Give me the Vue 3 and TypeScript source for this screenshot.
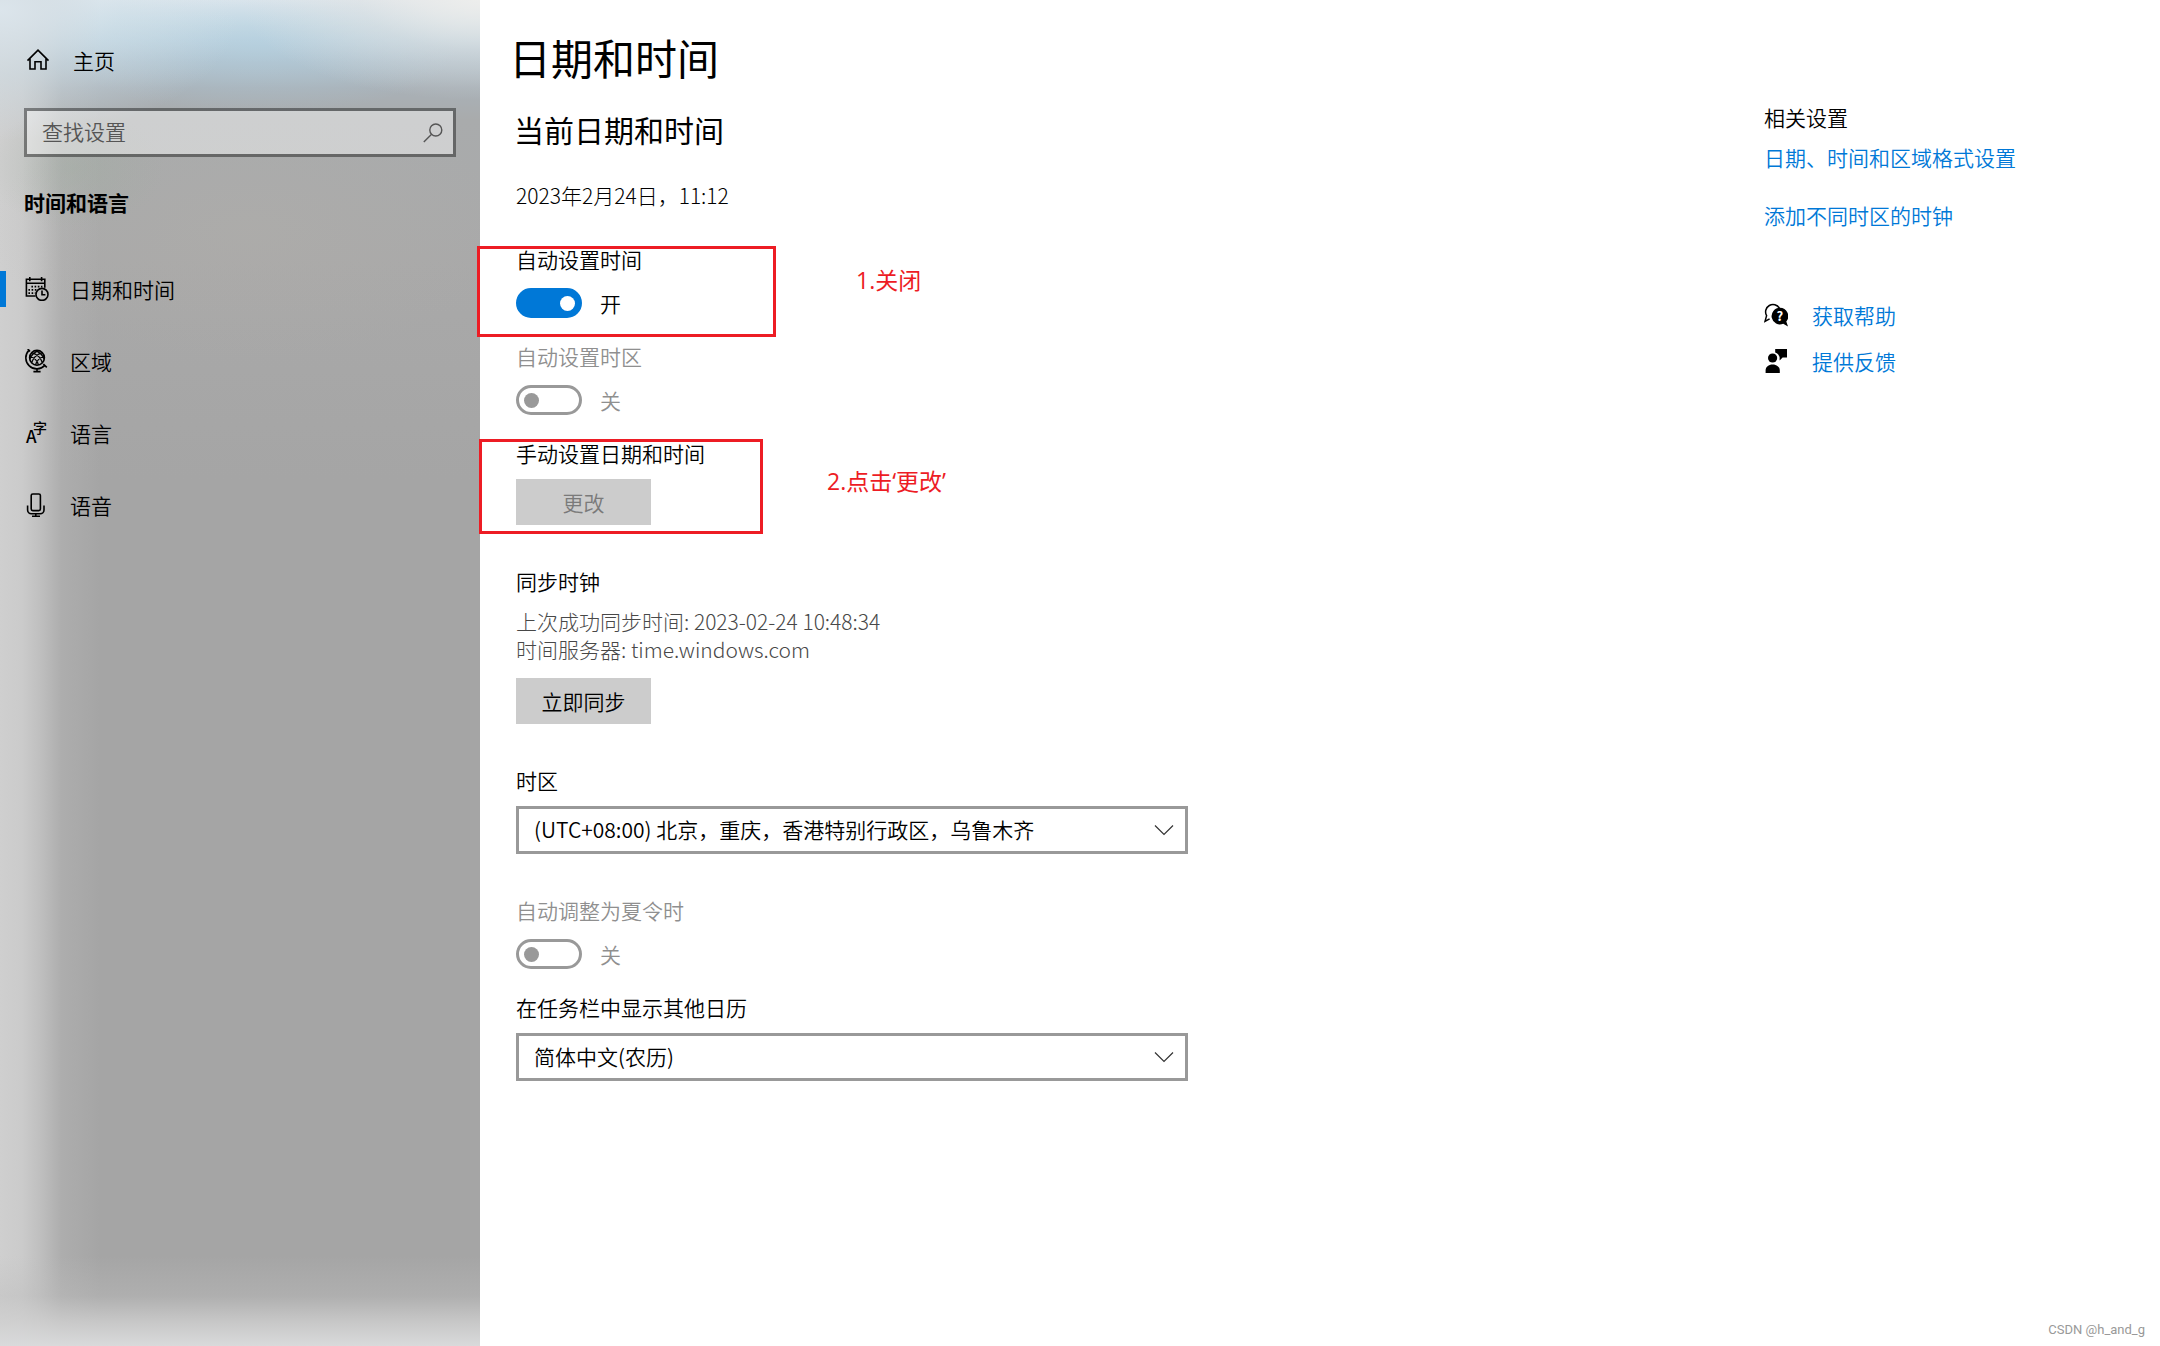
<script setup lang="ts">
import { ref } from 'vue'

interface NavItem {
  id: string
  label: string
}

const navItems: NavItem[] = [
  { id: 'datetime', label: '日期和时间' },
  { id: 'region', label: '区域' },
  { id: 'language', label: '语言' },
  { id: 'speech', label: '语音' },
]

const active = ref('datetime')
const autoTime = ref(true)
const autoZone = ref(false)
const daylight = ref(false)
const query = ref('')
const zone = ref('cn')
const calendar = ref('lunar')
</script>

<template>
  <div class="page">
    <aside class="sidebar">
      <a class="home" href="#">
        <svg class="icon" viewBox="0 0 24 24" aria-hidden="true">
          <path d="M1.5 12.6 12 2.2 22.5 12.6M4 10.6V21h5v-7.2h6V21h5V10.6" />
        </svg>
        <span>主页</span>
      </a>

      <div class="search">
        <input v-model="query" type="text" placeholder="查找设置" aria-label="查找设置" />
        <svg class="search-icon" viewBox="0 0 20 20" aria-hidden="true">
          <circle cx="12.8" cy="7" r="6" />
          <path d="M8.6 11.3 .8 19" />
        </svg>
      </div>

      <h2 class="group-title">时间和语言</h2>

      <nav class="nav">
        <a
          v-for="item in navItems"
          :key="item.id"
          href="#"
          class="nav-item"
          :class="{ active: item.id === active }"
          @click.prevent="active = item.id"
        >
          <svg v-if="item.id === 'datetime'" class="icon" viewBox="0 0 24 24" aria-hidden="true">
            <path d="M10.5 19H1.4V2.2h18.4v8.6M1.4 6.2h18.4M4.8 0v4.2M16.6 0v4.2" />
            <path class="dots" d="M6.4 9.6h11M3.4 12.9h9M3.4 16.1h7" />
            <circle cx="17" cy="17.4" r="6" />
            <path d="M17 13.4v4.4h3.4" />
          </svg>
          <svg v-else-if="item.id === 'region'" class="icon" viewBox="0 0 24 24" aria-hidden="true">
            <circle cx="12" cy="8.8" r="7.4" />
            <path class="mesh" d="M6.800 3.800Q14.500 5.500 17.400 13.800M4.800 7.500Q11.500 9 13.500 16M10.500 1.600Q17 4 19.200 10.400M17.200 3.800Q9.500 5.500 6.600 13.800M19.200 7.500Q12.500 9 10.500 16M13.500 1.600Q7 4 4.800 10.400" />
            <path d="M2.600 -.4 5 2.400M18.400 15 21.800 18.400M3.800 1.400A10.800 10.800 0 0 0 19.800 16.400M12 19.600v3M8.400 22.600h7.200" />
          </svg>
          <svg v-else-if="item.id === 'language'" class="icon letters" viewBox="-5 -5 34 34" aria-hidden="true">
            <text x="1" y="22" font-size="17">A</text>
            <text x="8" y="12" font-size="14">字</text>
          </svg>
          <svg v-else class="icon" viewBox="0 0 24 24" aria-hidden="true">
            <rect x="6.200" y="1" width="9.200" height="16.600" rx="1.600" />
            <path d="M2.600 12.600V17a3.800 3.800 0 0 0 3.800 3.800h8.800A3.800 3.800 0 0 0 19 17v-4.400M10.800 21v2.400M7 23.400h8" />
          </svg>
          <span>{{ item.label }}</span>
        </a>
      </nav>
    </aside>

    <main class="content">
      <h1>日期和时间</h1>
      <h2>当前日期和时间</h2>
      <p class="now">2023年2月24日，11:12</p>

      <section class="field first">
        <label for="auto-time">自动设置时间</label>
        <div class="toggle-row">
          <input id="auto-time" v-model="autoTime" class="toggle" type="checkbox" role="switch" />
          <span>{{ autoTime ? '开' : '关' }}</span>
        </div>
        <div class="mark mark-time"></div>
        <p class="note note-time">1.关闭</p>
      </section>

      <section class="field near disabled">
        <label for="auto-zone">自动设置时区</label>
        <div class="toggle-row">
          <input id="auto-zone" v-model="autoZone" class="toggle" type="checkbox" role="switch" disabled />
          <span>{{ autoZone ? '开' : '关' }}</span>
        </div>
      </section>

      <section class="field near">
        <h3>手动设置日期和时间</h3>
        <button class="button" type="button" disabled>更改</button>
        <div class="mark mark-manual"></div>
        <p class="note note-manual">2.点击‘更改’</p>
      </section>

      <section class="field">
        <h3>同步时钟</h3>
        <p class="sync">
          上次成功同步时间: 2023-02-24 10:48:34<br />
          时间服务器: time.windows.com
        </p>
        <button class="button sync-button" type="button">立即同步</button>
      </section>

      <section class="field">
        <label for="zone">时区</label>
        <div class="select">
          <select id="zone" v-model="zone">
            <option value="cn">(UTC+08:00) 北京，重庆，香港特别行政区，乌鲁木齐</option>
          </select>
          <svg class="chevron" viewBox="0 0 20 12" aria-hidden="true"><path d="m1 1.500 9 9 9-9" /></svg>
        </div>
      </section>

      <section class="field disabled">
        <label for="daylight">自动调整为夏令时</label>
        <div class="toggle-row">
          <input id="daylight" v-model="daylight" class="toggle" type="checkbox" role="switch" disabled />
          <span>{{ daylight ? '开' : '关' }}</span>
        </div>
      </section>

      <section class="field near">
        <label for="calendar">在任务栏中显示其他日历</label>
        <div class="select">
          <select id="calendar" v-model="calendar">
            <option value="lunar">简体中文(农历)</option>
          </select>
          <svg class="chevron" viewBox="0 0 20 12" aria-hidden="true"><path d="m1 1.500 9 9 9-9" /></svg>
        </div>
      </section>
    </main>

    <aside class="related">
      <h3>相关设置</h3>
      <a class="related-link" href="#">日期、时间和区域格式设置</a>
      <a class="related-link" href="#">添加不同时区的时钟</a>
      <div class="support">
        <a href="#">
          <svg class="solid" viewBox="0 0 24 24" aria-hidden="true">
            <path class="line" d="M15.400 5.200A7.200 7.200 0 1 0 2.600 12.600L1 18.400l4.600-2.600" />
            <path d="M15.800 4.800a8.300 8.300 0 1 0 3.400 15.900L24 23.400l-1.700-5A8.300 8.300 0 0 0 15.800 4.800Z" />
            <text x="15.800" y="17.800" text-anchor="middle">?</text>
          </svg>
          <span>获取帮助</span>
        </a>
        <a href="#">
          <svg class="solid" viewBox="0 0 24 24" aria-hidden="true">
            <circle cx="8.600" cy="9" r="4.600" />
            <path d="M1.600 24v-2.600c0-3.600 3-6 7-6s7.200 2.400 7.200 6V24ZM11.200 0H23v8.600h-4.400l-3 3V8.200c-.6-2.400-2-4-4.400-4.800Z" />
          </svg>
          <span>提供反馈</span>
        </a>
      </div>
    </aside>

    <footer class="watermark">CSDN @h_and_g</footer>
  </div>
</template>

<style>
body {
  margin: 0;
  background: #fff;
}
</style>

<style scoped>
.page {
  position: relative;
  display: flex;
  min-height: 100vh;
  font-family: "Noto Sans CJK SC", "Noto Sans", sans-serif;
  font-size: 21px;
  font-weight: 350;
  line-height: 28px;
  color: #000;
}

h1,
h2,
h3,
p {
  margin: 0;
  font-size: 21px;
  font-weight: 350;
}

a {
  color: #0078d7;
  text-decoration: none;
}

.sidebar {
  flex: 0 0 480px;
  box-sizing: border-box;
  padding-top: 40px;
  background:
    radial-gradient(ellipse 240px 130px at 0 10px, rgba(220, 230, 237, 0.95), rgba(208, 224, 233, 0.5) 50%, transparent),
    radial-gradient(ellipse 90px 60px at 75px 168px, rgba(160, 174, 160, 0.35), transparent),
    radial-gradient(ellipse 260px 130px at 250px 230px, rgba(180, 176, 170, 0.3), transparent),
    linear-gradient(to top, #d9dadb 0, rgba(208, 208, 208, 0.8) 24px, rgba(190, 190, 190, 0.4) 50px, transparent 90px),
    linear-gradient(to right, #cfcfcf 0, rgba(205, 205, 205, 0.95) 22px, rgba(200, 200, 200, 0.75) 40px, rgba(188, 188, 188, 0.35) 62px, transparent 100px),
    radial-gradient(ellipse 240px 100px at 480px 0, rgba(238, 238, 236, 0.9), rgba(225, 226, 226, 0.45) 50%, transparent),
    radial-gradient(ellipse 200px 70px at 260px 45px, rgba(176, 208, 226, 0.5), transparent),
    linear-gradient(to bottom, #e2e9ee 0, #d0dfe7 20px, #bfd2dd 40px, #b1c0ca 62px, #a9b1b7 88px, #a9abac 120px, #a9a9a9 260px, #a5a5a5 480px);
}

.home,
.nav-item {
  display: flex;
  align-items: center;
  color: #000;
}

.home {
  gap: 23px;
  height: 40px;
  padding-left: 26px;
}

.icon {
  flex: none;
  width: 24px;
  height: 24px;
  fill: none;
  stroke: #000;
  stroke-width: 1.6;
}

.mesh {
  stroke-width: 1.2;
}

.dots {
  stroke-dasharray: 1.6 1.6;
}

.letters {
  width: 34px;
  height: 34px;
  margin: -5px;
  fill: #000;
  stroke: none;
  font-weight: 500;
}

.search {
  display: flex;
  align-items: center;
  box-sizing: border-box;
  height: 49px;
  margin: 28px 24px 0;
  padding: 0 10px 0 15px;
  border: 3px solid rgba(0, 0, 0, 0.4);
  background: rgba(255, 255, 255, 0.43);
  background-clip: padding-box;
}

.search input {
  flex: 1;
  min-width: 0;
  height: 28px;
  margin-bottom: 3px;
  padding: 0;
  border: 0;
  outline: 0;
  background: none;
  font: inherit;
  color: #000;
}

.search input::placeholder {
  color: #555;
  opacity: 1;
}

.search-icon {
  width: 20px;
  height: 20px;
  fill: none;
  stroke: #555;
  stroke-width: 1.4;
}

.group-title {
  margin: 31px 0 37px 24px;
  font-weight: 700;
}

.nav-item {
  position: relative;
  gap: 21px;
  height: 72px;
  padding-left: 25px;
}

.nav-item.active::before {
  content: "";
  position: absolute;
  top: 18px;
  left: 0;
  width: 6px;
  height: 36px;
  background: #0078d7;
}

.content {
  flex: 1;
  min-width: 0;
  padding: 27px 36px 60px;
}

.content h1 {
  margin-left: -7px;
  font-size: 42px;
  font-weight: 400;
  line-height: 60px;
}

.content h2 {
  margin-top: 22px;
  margin-left: -2px;
  font-size: 30px;
  font-weight: 400;
  line-height: 40px;
}

.now {
  margin-top: 32px;
  font-weight: 300;
}

.field {
  position: relative;
  max-width: 672px;
  margin-top: 42px;
}

.field.first {
  margin-top: 36px;
}

.field.near {
  margin-top: 24px;
}

.field > label {
  display: block;
}

.disabled {
  color: #8f8f8f;
}

.toggle-row {
  display: flex;
  align-items: center;
  gap: 18px;
  height: 30px;
  margin-top: 15px;
}

.toggle {
  appearance: none;
  display: flex;
  align-items: center;
  box-sizing: border-box;
  width: 66px;
  height: 30px;
  margin: 0;
  padding: 0 5px;
  border: 3px solid #333;
  border-radius: 15px;
}

.toggle::before {
  content: "";
  width: 15px;
  height: 15px;
  border-radius: 50%;
  background: #333;
}

.toggle:disabled {
  border-color: #999;
}

.toggle:disabled::before {
  background: #999;
}

.toggle:checked {
  justify-content: flex-end;
  padding: 0 4px;
  border-color: #0078d7;
  background: #0078d7;
}

.toggle:checked::before {
  background: #fff;
}

.button {
  display: block;
  width: 135px;
  height: 46px;
  margin-top: 12px;
  padding: 0;
  border: 0;
  background: #ccc;
  font: inherit;
  color: #000;
}

.button:disabled {
  color: #7a7a7a;
}

.sync {
  margin-top: 12px;
  font-weight: 300;
  color: #484848;
}

.sync-button {
  margin-top: 15px;
}

.select {
  position: relative;
  margin-top: 12px;
}

.select select {
  appearance: none;
  display: block;
  box-sizing: border-box;
  width: 100%;
  height: 48px;
  padding: 0 50px 2px 15px;
  border: 3px solid #999;
  border-radius: 0;
  background: #fff;
  font: inherit;
  color: #000;
}

.chevron {
  position: absolute;
  top: 18px;
  right: 14px;
  width: 20px;
  height: 12px;
  fill: none;
  stroke: #333;
  stroke-width: 1.2;
  pointer-events: none;
}

.mark {
  position: absolute;
  box-sizing: border-box;
  border: 3px solid #ed1c24;
  pointer-events: none;
}

.mark-time {
  top: 1px;
  left: -39px;
  width: 299px;
  height: 91px;
}

.mark-manual {
  top: 0;
  left: -37px;
  width: 284px;
  height: 95px;
}

.note {
  position: absolute;
  font-family: "Open Sans", "Noto Sans CJK SC", sans-serif;
  font-size: 23px;
  font-weight: 400;
  color: #ed1c24;
  white-space: nowrap;
}

.note-time {
  top: 21px;
  left: 340px;
}

.note-manual {
  top: 28px;
  left: 311px;
}

.related {
  flex: 0 0 396px;
  padding-top: 103px;
}

.related-link {
  display: block;
  width: fit-content;
  margin-top: 12px;
}

.related-link + .related-link {
  margin-top: 30px;
}

.support {
  display: flex;
  flex-direction: column;
  gap: 18px;
  margin-top: 72px;
}

.support a {
  display: flex;
  align-items: center;
  gap: 24px;
  width: fit-content;
}

.solid {
  width: 24px;
  height: 24px;
  fill: #000;
}

.solid .line {
  fill: none;
  stroke: #000;
  stroke-width: 1.5;
}

.solid text {
  fill: #fff;
  font-size: 13px;
  font-weight: 700;
}

.watermark {
  position: absolute;
  right: 15px;
  bottom: 6px;
  font-family: Roboto, "Liberation Sans", sans-serif;
  font-size: 13px;
  font-weight: 400;
  line-height: 20px;
  color: #999;
}
</style>
